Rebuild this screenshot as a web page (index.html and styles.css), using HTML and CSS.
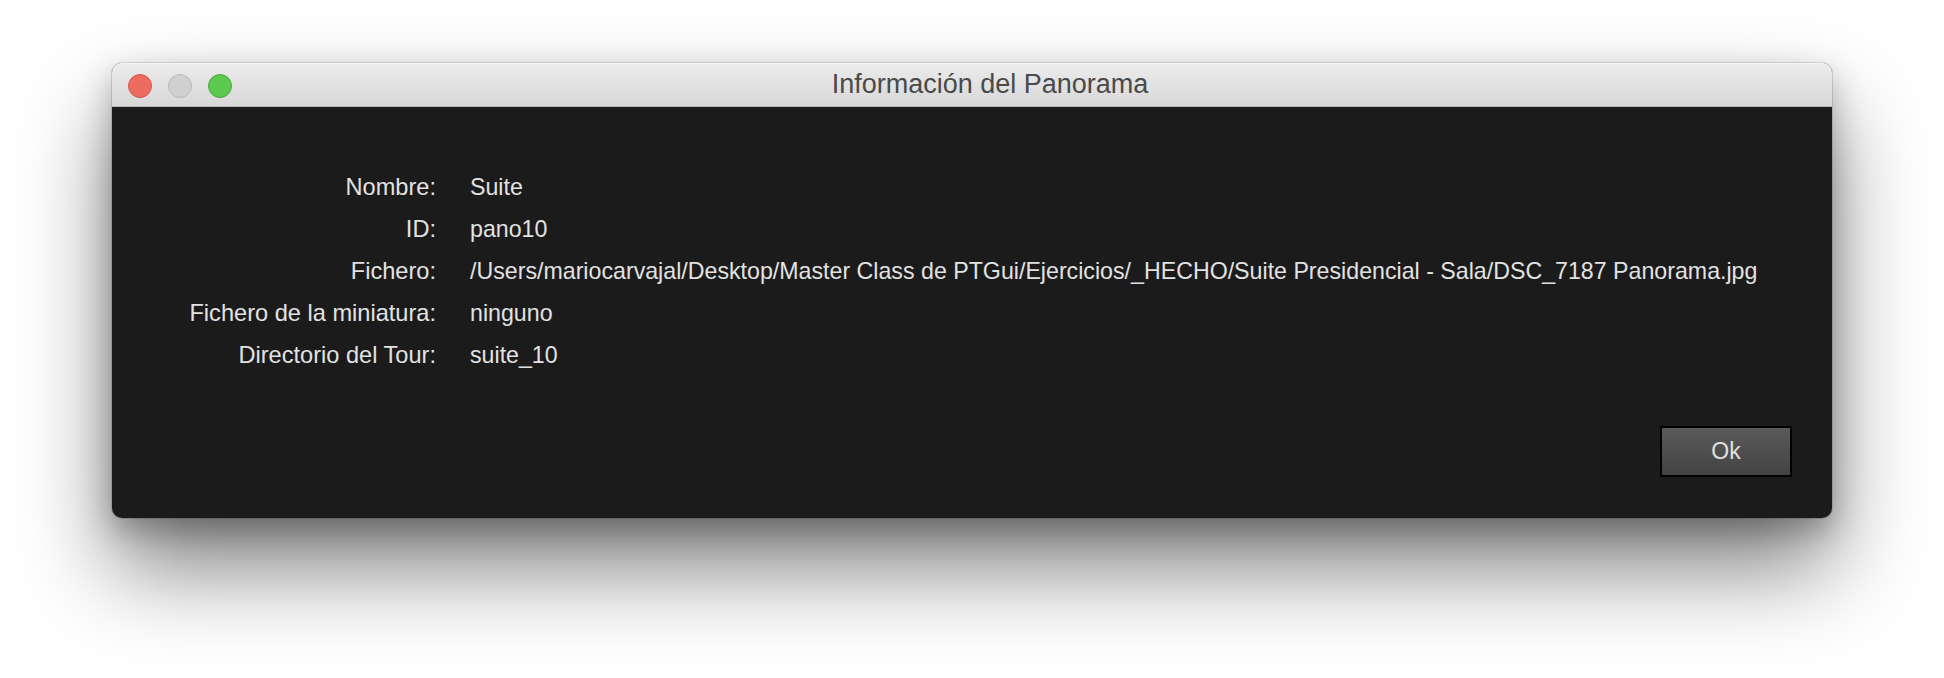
FILE: index.html
```html
<!DOCTYPE html>
<html lang="es">
<head>
  <meta charset="UTF-8">
  <meta name="viewport" content="width=device-width, initial-scale=1.0">
  <title>Información del Panorama</title>
  <link rel="stylesheet" href="styles.css">
</head>
<body>
  <div class="window">
    <div class="titlebar">
      <div class="lights">
        <span class="light close"></span>
        <span class="light minimize"></span>
        <span class="light zoom"></span>
      </div>
      <div class="title">Información del Panorama</div>
    </div>
    <div class="content">
      <div class="info">
        <div class="label">Nombre:</div>
        <div class="value">Suite</div>

        <div class="label">ID:</div>
        <div class="value">pano10</div>

        <div class="label">Fichero:</div>
        <div class="value">/Users/mariocarvajal/Desktop/Master Class de PTGui/Ejercicios/_HECHO/Suite Presidencial - Sala/DSC_7187 Panorama.jpg</div>

        <div class="label">Fichero de la miniatura:</div>
        <div class="value">ninguno</div>

        <div class="label">Directorio del Tour:</div>
        <div class="value">suite_10</div>
      </div>
      <div class="actions">
        <button type="button" class="ok-button">Ok</button>
      </div>
    </div>
  </div>
</body>
</html>
```

FILE: styles.css
```css
html, body {
  margin: 0;
  padding: 0;
}
body {
  font-family: "Liberation Sans", Arial, sans-serif;
  background-color: #ffffff;
  height: 678px;
  overflow: hidden;
}
.window {
  margin: 63px 0 0 112px;
  width: 1720px;
  height: 455px;
  border-radius: 10px;
  background: #1b1b1b;
  display: flex;
  flex-direction: column;
  box-shadow: 0 0 0 1px rgba(0,0,0,0.12), 0 50px 90px rgba(0,0,0,0.5), 0 12px 30px rgba(0,0,0,0.25);
}
.titlebar {
  height: 43px;
  flex-shrink: 0;
  border-radius: 10px 10px 0 0;
  background: linear-gradient(#ececec, #d8d8d8);
  border-bottom: 1px solid #b4b4b4;
  box-shadow: inset 0 1px 0 #f6f6f6;
  position: relative;
  display: flex;
  align-items: center;
  justify-content: center;
}
.lights {
  position: absolute;
  left: 16px;
  top: 11px;
  display: flex;
  gap: 16px;
}
.light {
  width: 22px;
  height: 22px;
  border-radius: 50%;
  border: 1px solid;
}
.close {
  background: #ee6b60;
  border-color: #d65349;
}
.minimize {
  background: #d0d0d0;
  border-color: #b9b9b9;
}
.zoom {
  background: #5bc84f;
  border-color: #46a93a;
}
.title {
  font-size: 27px;
  color: #4a4a4a;
  padding-left: 36px;
}
.content {
  flex: 1;
  display: flex;
  flex-direction: column;
  padding: 59px 40px 41px 0;
}
.info {
  display: grid;
  grid-template-columns: 324px auto;
  column-gap: 34px;
  grid-auto-rows: 42px;
  align-items: center;
  font-size: 23.2px;
  color: #e2e2e2;
}
.label {
  text-align: right;
  font-size: 23.6px;
}
.value {
  white-space: nowrap;
}
.actions {
  margin-top: auto;
  display: flex;
  justify-content: flex-end;
}
.ok-button {
  width: 132px;
  height: 51px;
  border: 2px solid #000;
  background: linear-gradient(#5a5a5a, #434343);
  color: #e0e0e0;
  font-family: "Liberation Sans", Arial, sans-serif;
  font-size: 23px;
  padding: 0;
  cursor: pointer;
}
```
